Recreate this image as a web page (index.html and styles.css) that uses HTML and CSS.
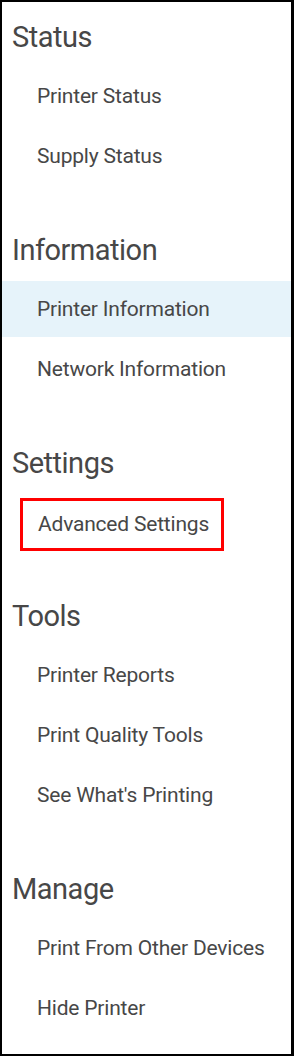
FILE: index.html
```html
<!DOCTYPE html>
<html lang="en">
<head>
    <meta charset="UTF-8">
    <meta name="viewport" content="width=device-width, initial-scale=1.0">
    <title>Printer Menu</title>
    <link rel="stylesheet" href="styles.css">
</head>
<body>
    <nav class="side-menu">
        <!-- Status -->
        <div class="section">
            <h2 class="section-title">Status</h2>
            <a class="item">Printer Status</a>
            <a class="item">Supply Status</a>
        </div>

        <!-- Information -->
        <div class="section">
            <h2 class="section-title">Information</h2>
            <a class="item selected">Printer Information</a>
            <a class="item">Network Information</a>
        </div>

        <!-- Settings -->
        <div class="section">
            <h2 class="section-title">Settings</h2>
            <a class="item"><span class="marked">Advanced Settings</span></a>
        </div>

        <!-- Tools -->
        <div class="section">
            <h2 class="section-title">Tools</h2>
            <a class="item">Printer Reports</a>
            <a class="item">Print Quality Tools</a>
            <a class="item">See What's Printing</a>
        </div>

        <!-- Manage -->
        <div class="section">
            <h2 class="section-title">Manage</h2>
            <a class="item">Print From Other Devices</a>
            <a class="item">Hide Printer</a>
        </div>
    </nav>
</body>
</html>
```

FILE: styles.css
```css
/* General Styles */
* {
    box-sizing: border-box;
}
body {
    margin: 0;
    font-family: Roboto, "Liberation Sans", sans-serif;
    color: #474747;
    background: white;
}

/* Menu Frame */
.side-menu {
    width: 294px;
    height: 1056px;
    border: 2px solid black;
    border-right-width: 3px;
    padding-top: 15px;
    display: flex;
    flex-direction: column;
    overflow: hidden;
}

/* Sections */
.section {
    display: flex;
    flex-direction: column;
}
.section + .section {
    margin-top: 42px;
}
.section-title {
    margin: 0 0 11px 0;
    padding-left: 10px;
    font-size: 29px;
    letter-spacing: -0.5px;
    line-height: 40px;
    font-weight: 400;
}

/* Items */
.item {
    display: flex;
    align-items: center;
    height: 56px;
    margin-bottom: 4px;
    padding-left: 35px;
    font-size: 21px;
    letter-spacing: -0.2px;
    cursor: pointer;
}
.item.selected {
    background: #e6f3fa;
}

/* Red highlight box */
.marked {
    display: inline-block;
    height: 53px;
    line-height: 47px;
    margin-left: -17px;
    margin-top: 5px;
    padding: 0 12px 0 15px;
    border: 3px solid #f00;
}
```
